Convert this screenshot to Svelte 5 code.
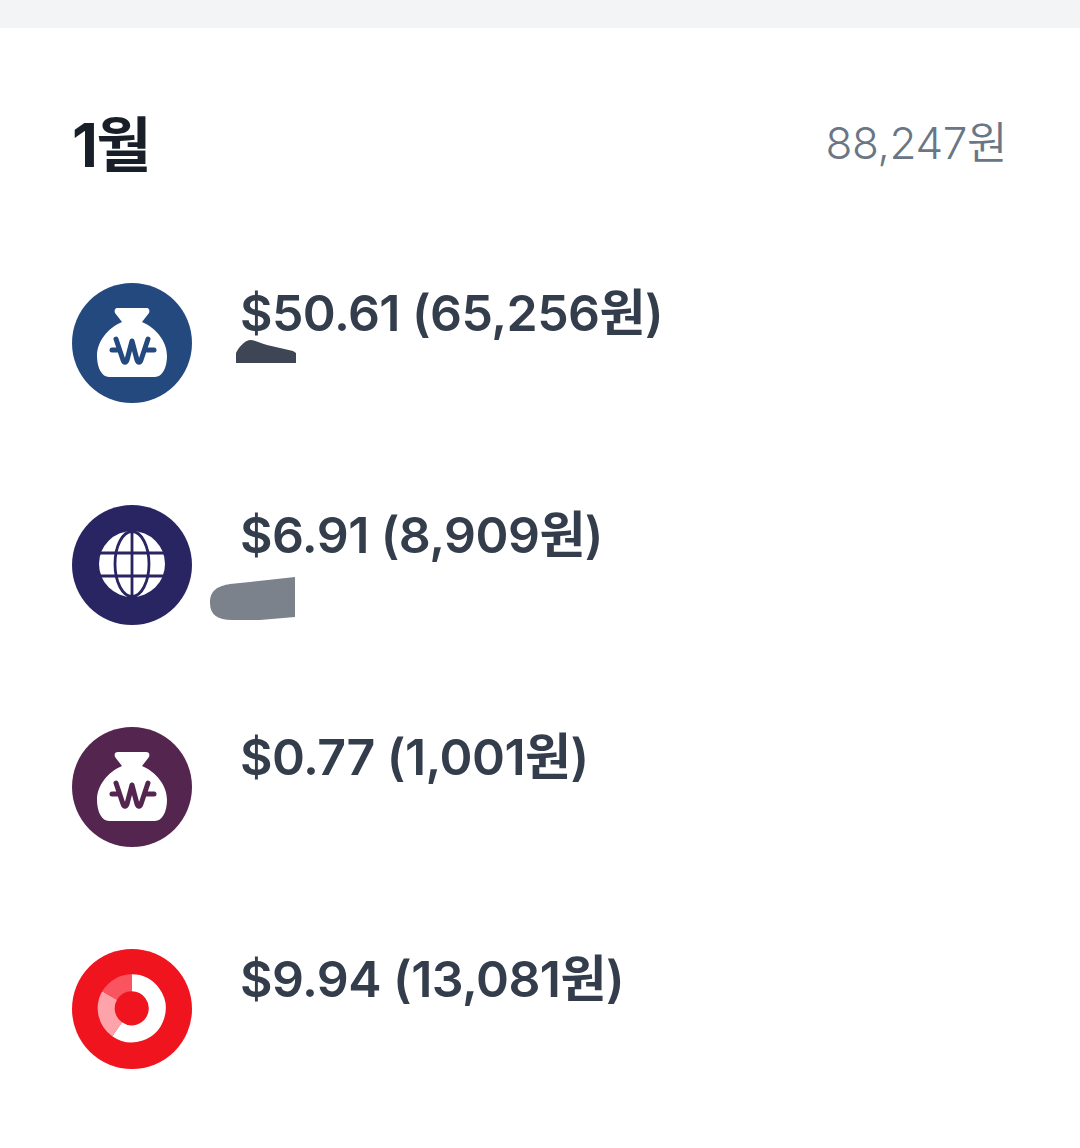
<script>
  const items = [
    { amount: '$50.61 (65,256원)', icon: 'bag', color: '#23497f', redact: 'short' },
    { amount: '$6.91 (8,909원)', icon: 'globe', color: '#292562', redact: 'long' },
    { amount: '$0.77 (1,001원)', icon: 'bag', color: '#54264f' },
    { amount: '$9.94 (13,081원)', icon: 'target', color: '#f0141f' }
  ];
</script>

<div class="page">
  <div class="band"></div>
  <section class="month">
    <header class="head">
      <h2>1월</h2>
      <span class="total">88,247원</span>
    </header>
    <ul class="list">
      {#each items as item}
        <li class="row">
          <svg class="icon" viewBox="0 0 120 120" aria-hidden="true">
            <circle cx="60" cy="60" r="60" fill={item.color} />
            {#if item.icon === 'bag'}
              <path
                fill="#fff"
                d="M46 25h28c3 0 4 2 3 5l-7 9C84 45 95 58 95 73c0 12-5 21-12 21H37c-7 0-12-9-12-21 0-15 11-28 25-34l-7-9c-1-3 0-5 3-5z"
              />
              <path
                fill="none"
                stroke={item.color}
                stroke-width="5"
                stroke-linecap="round"
                stroke-linejoin="round"
                d="M40 67h7M74 67h8M44 56l7 21c1 3 3 3 4 0l5-19 5 19c1 3 3 3 4 0l7-21"
              />
            {:else if item.icon === 'globe'}
              <circle cx="60" cy="59" r="33" fill="#fff" />
              <g fill="none" stroke={item.color} stroke-width="2.8">
                <ellipse cx="60" cy="59" rx="17" ry="32.5" />
                <path d="M60 26v66M27 48h66M27 71h66" />
              </g>
            {:else}
              <g fill="none" stroke-width="17" transform="translate(-0.3 -0.7)">
                <path stroke="#fff" d="M60 34.5a25.5 25.5 0 1 1-14.6 46.4" />
                <path stroke="#ffa3ab" d="M45.4 80.9a25.5 25.5 0 0 1-7.5-33.6" />
                <path stroke="#f9545f" d="M37.9 47.3A25.5 25.5 0 0 1 60 34.5" />
              </g>
            {/if}
          </svg>
          <div class="info">
            <p class="amount">{item.amount}</p>
            {#if item.redact === 'short'}
              <svg class="redact short" viewBox="0 0 62 24" aria-hidden="true">
                <path fill="#3e4655" d="M1 23V13C4 7 9 1 15 0c5 0 9 3 17 5l26 6 3 2v10z" />
              </svg>
            {:else if item.redact === 'long'}
              <svg class="redact long" viewBox="0 0 86 44" aria-hidden="true">
                <path fill="#7c828b" d="M85 0v40l-35 3H22C8 43 0 38 0 26 0 13 8 9 20 7l20-2z" />
              </svg>
            {/if}
          </div>
        </li>
      {/each}
    </ul>
  </section>
</div>

<style>
  :global(body) {
    margin: 0;
    background: #fff;
  }

  .page {
    width: 1080px;
    height: 1148px;
    overflow: hidden;
    font-family: Inter, "Noto Sans CJK KR", sans-serif;
  }

  .band {
    height: 28px;
    background: #f2f4f6;
  }

  .month {
    padding: 74px 73px 0 72px;
  }

  .head {
    display: flex;
    justify-content: space-between;
    align-items: center;
    height: 76px;
  }

  h2 {
    margin: 0;
    font-size: 60px;
    font-weight: 700;
    letter-spacing: -1.5px;
    color: #191f28;
  }

  .total {
    font-size: 44px;
    font-weight: 350;
    letter-spacing: -0.4px;
    color: #6b7684;
  }

  .list {
    list-style: none;
    margin: 105px 0 0;
    padding: 0;
    display: flex;
    flex-direction: column;
    gap: 102px;
  }

  .row {
    position: relative;
    display: flex;
    gap: 48px;
    height: 120px;
  }

  .icon {
    width: 120px;
    height: 120px;
    flex: none;
  }

  .amount {
    margin: 0;
    font-size: 50px;
    line-height: 60px;
    font-weight: 600;
    letter-spacing: -0.55px;
    color: #333d4b;
  }

  .redact {
    position: absolute;
    display: block;
  }

  .short {
    left: 163px;
    top: 57px;
    width: 62px;
    height: 24px;
  }

  .long {
    left: 138px;
    top: 72px;
    width: 86px;
    height: 44px;
  }
</style>
